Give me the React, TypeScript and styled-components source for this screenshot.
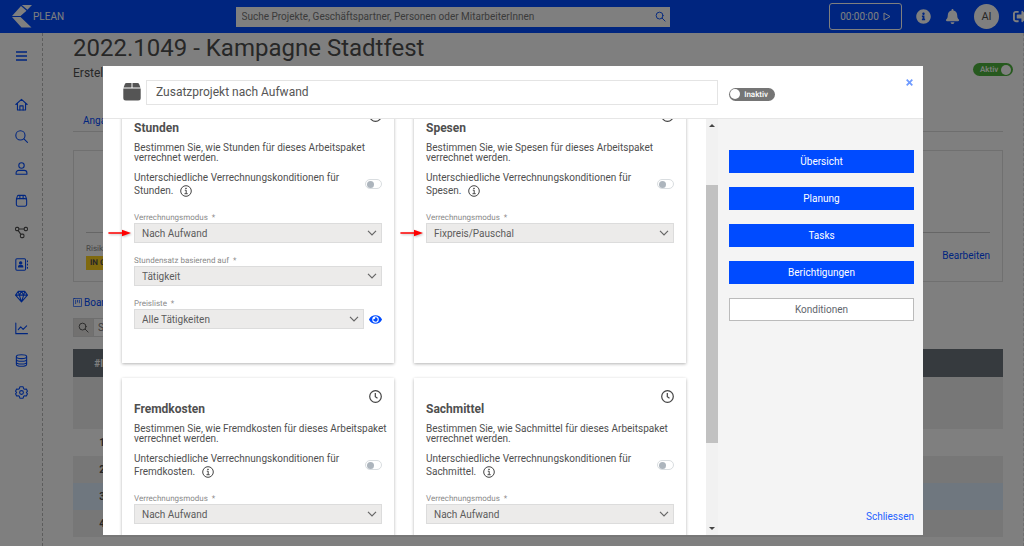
import React, { useId, useLayoutEffect, useRef } from "react";
import styled, { createGlobalStyle } from "styled-components";
import { FaBell, FaEye, FaInfoCircle, FaSignOutAlt } from "react-icons/fa";

const BLUE = "#004bff";
const INK = "#4f4f4f";

const GlobalStyle = createGlobalStyle`
  * { box-sizing: border-box; }
  html, body, #root { height: 100%; }
  body {
    margin: 0;
    overflow: hidden;
    background: #fff;
    color: ${INK};
    font-family: Roboto, "Liberation Sans", sans-serif;
    font-size: 10px;
  }
  button, input, select { font: inherit; color: inherit; }
  a { text-decoration: none; color: ${BLUE}; }
`;

/* ---------- Page behind the dialog ---------- */

const Page = styled.div`
  display: flex;
  flex-direction: column;
  height: 100vh;
  overflow: hidden;
`;

const TopBar = styled.header`
  display: flex;
  align-items: center;
  flex: none;
  height: 33px;
  background: ${BLUE};
  color: #fff;
`;

const Brand = styled.a`
  display: flex;
  align-items: center;
  gap: 1px;
  width: 23%;
  padding-left: 12px;
  color: #fff;
  font-size: 10px;
`;

const GlobalSearch = styled.form`
  display: flex;
  align-items: center;
  flex: 0 0 434px;
  height: 20px;
  padding: 0 4px 0 6px;
  background: #fff;
  color: ${BLUE};
`;

const SearchInput = styled.input`
  flex: 1;
  min-width: 0;
  padding: 0;
  border: 0;
  outline: 0;
  background: none;
  font-size: 10px;
  color: ${INK};
  &::placeholder { color: #777; opacity: 1; }
`;

const IconButton = styled.button`
  display: flex;
  align-items: center;
  justify-content: center;
  flex: none;
  padding: 0;
  border: 0;
  background: none;
  color: inherit;
`;

const TopActions = styled.div`
  display: flex;
  flex: 1;
  align-items: center;
  justify-content: flex-end;
  gap: 14px;
  margin-right: -4px;
`;

const TimerButton = styled.button`
  display: flex;
  align-items: center;
  justify-content: center;
  gap: 4px;
  width: 73px;
  height: 27px;
  padding: 0;
  border: 1px solid #fff;
  border-radius: 3px;
  background: none;
  font-size: 10px;
`;

const Avatar = styled.span`
  display: flex;
  align-items: center;
  justify-content: center;
  width: 25px;
  height: 25px;
  border-radius: 50%;
  background: #fff;
  color: ${INK};
  font-size: 11px;
`;

const Workspace = styled.div`
  display: flex;
  flex: 1;
  min-height: 0;
`;

const Sidebar = styled.nav`
  display: flex;
  flex-direction: column;
  align-items: center;
  flex: none;
  width: 43px;
  padding-top: 15px;
  border-right: 1px dashed #bbb;
`;

const MenuButton = styled(IconButton)`
  height: 16px;
  margin-bottom: 32px;
  color: ${BLUE};
`;

const NavLink = styled.a<{ $muted?: boolean }>`
  display: flex;
  height: 16px;
  align-items: center;
  margin-bottom: 16px;
  color: ${(p) => (p.$muted ? INK : BLUE)};
`;

const Main = styled.main`
  flex: 1;
  min-width: 0;
  padding: 0 20px 0 30px;
  border-right: 1px dashed #ddd;
`;

const TitleRow = styled.div`
  display: flex;
  justify-content: space-between;
  margin-right: -10px;
`;

const Title = styled.h1`
  margin: 0;
  font-size: 24px;
  line-height: 30px;
  font-weight: 400;
`;

const Subtitle = styled.p`
  margin: 0;
  font-size: 12px;
  line-height: 20px;
`;

const StatusPill = styled.button<{ $on?: boolean }>`
  display: flex;
  flex-direction: ${(p) => (p.$on ? "row-reverse" : "row")};
  align-items: center;
  justify-content: space-between;
  flex: none;
  width: ${(p) => (p.$on ? 40 : 46)}px;
  height: 13px;
  padding: ${(p) => (p.$on ? "0 2px 0 7px" : "0 7px 0 1px")};
  border: 0;
  border-radius: 7px;
  background: ${(p) => (p.$on ? "#4db33d" : "#757575")};
  color: #fff;
  font-size: 8px;
  font-weight: 500;
  text-rendering: geometricPrecision;
  &::before {
    content: "";
    width: 10px;
    height: 10px;
    border-radius: 50%;
    background: #fff;
  }
`;

const PageStatus = styled.div`
  padding-top: 30px;
`;

const Tabs = styled.div`
  margin-top: 28px;
  padding: 0 10px;
  height: 21px;
  border-bottom: 1px solid #ddd;
  line-height: 20px;
`;

const InfoCard = styled.section`
  display: flex;
  flex-direction: column;
  justify-content: flex-end;
  height: 132px;
  margin-top: 18px;
  padding: 0 12px 11px;
  border: 1px solid #e0e0e0;
`;

const InfoRow = styled.div`
  display: flex;
  align-items: flex-start;
  justify-content: space-between;
  padding-top: 11px;
  border-top: 1px solid #ccc;
`;

const EditLink = styled.a`
  line-height: 24px;
`;

const RiskLabel = styled.div`
  margin-bottom: 2px;
  font-size: 8px;
  line-height: 10px;
  color: #888;
  text-rendering: geometricPrecision;
`;

const RiskBadge = styled.span`
  display: inline-block;
  padding: 0 4px;
  background: #ffd21f;
  font-size: 8px;
  line-height: 14px;
  font-weight: 700;
  text-rendering: geometricPrecision;
`;

const BoardLink = styled.a`
  display: flex;
  align-items: center;
  gap: 2px;
  height: 12px;
  margin-top: 14px;
`;

const TableSearch = styled.form`
  display: flex;
  width: 200px;
  height: 19px;
  margin: 10px 0 12px;
  border: 1px solid #ddd;
  line-height: 17px;
`;

const SearchAddon = styled.button`
  display: flex;
  align-items: center;
  justify-content: center;
  width: 20px;
  padding: 0;
  margin-right: 4px;
  border: 0;
  border-right: 1px solid #ddd;
  background: #e4e2e0;
`;

const Table = styled.table`
  width: 100%;
  border-collapse: collapse;
  table-layout: fixed;
  font-weight: 700;
`;

const HeadRow = styled.tr`
  height: 28px;
  background: #6c757d;
  color: #fff;
`;

const BodyRow = styled.tr<{ $tone: string; $tall?: boolean }>`
  height: ${(p) => (p.$tall ? 52 : 27)}px;
  background: ${(p) => p.$tone};
`;

const NumberCell = styled.td`
  width: 58px;
  padding: 0;
  text-align: center;
`;

/* ---------- Dialog ---------- */

const Backdrop = styled.div`
  position: fixed;
  inset: 0;
  display: flex;
  padding: 66px 101px 11px 103px;
  background: rgba(0, 0, 0, 0.5);
`;

const Dialog = styled.div`
  display: flex;
  flex-direction: column;
  flex: 1;
  min-width: 0;
  border: 0;
  background: #fff;
`;

const DialogHeader = styled.header`
  display: flex;
  align-items: center;
  flex: none;
  height: 53px;
  border-bottom: 1px solid #e6e6e6;
`;

const NameArea = styled.label`
  display: flex;
  align-items: center;
  flex: 1;
  gap: 5px;
  padding-left: 20px;
  color: #555;
`;

const NameInput = styled.input`
  flex: 1;
  min-width: 0;
  height: 25px;
  padding: 0 9px;
  border: 1px solid #e4e4e4;
  outline: 0;
  background: #fff;
  font-size: 12px;
`;

const HeaderSide = styled.div`
  display: flex;
  align-items: center;
  justify-content: space-between;
  flex: none;
  width: 205px;
  padding: 4px 10px 0 11px;
`;

const CloseButton = styled(IconButton)`
  align-self: flex-start;
  height: 8px;
  margin-top: -9px;
  color: #6f9bff;
`;

const DialogBody = styled.div`
  display: flex;
  flex: 1;
  min-height: 0;
`;

const ScrollArea = styled.div`
  flex: 1;
  min-width: 0;
  overflow: hidden;
`;

const CardGrid = styled.div`
  display: grid;
  grid-template-columns: 1fr 1fr;
  gap: 15px 20px;
  padding: 67px 20px 20px 19px;
`;

const Card = styled.section`
  min-height: 266px;
  padding: 12px;
  background: #fff;
  box-shadow: 0 1px 3px rgba(0, 0, 0, 0.3);
`;

const ClockRow = styled.div`
  display: flex;
  justify-content: flex-end;
  height: 12px;
`;

const CardTitle = styled.h2`
  margin: 0 0 8px;
  font-size: 12px;
  line-height: 14px;
  font-weight: 700;
`;

const CardText = styled.p`
  margin: 0 -8px 0 0;
  font-size: 10px;
  line-height: 10px;
`;

const SwitchRow = styled.div`
  display: flex;
  align-items: center;
  justify-content: space-between;
  height: 26px;
  margin: 8px 0 15px;
`;

const SwitchLabel = styled.label`
  width: 210px;
  font-size: 10px;
  line-height: 13px;
`;

const InfoMark = styled.svg`
  margin-left: 4px;
  vertical-align: -3px;
`;

const Switch = styled.input`
  appearance: none;
  display: flex;
  align-items: center;
  width: 17px;
  height: 10px;
  margin: 0;
  padding: 0 1px;
  border: 1px solid #d9dde0;
  border-radius: 5px;
  background: #fff;
  &::before {
    content: "";
    width: 7px;
    height: 7px;
    border-radius: 50%;
    background: #adb5bd;
  }
`;

const Field = styled.div`
  position: relative;
  margin-bottom: 12px;
`;

const FieldLabel = styled.label`
  display: block;
  font-size: 8px;
  line-height: 11px;
  color: #8a8a8a;
  text-rendering: geometricPrecision;
`;

const FieldLine = styled.div`
  display: flex;
  align-items: center;
  gap: 5px;
`;

const SelectBox = styled.div`
  display: grid;
  flex: 1;
  align-items: center;
  & > * { grid-area: 1 / 1; }
  & > svg { justify-self: end; margin-right: 5px; pointer-events: none; }
`;

const Select = styled.select`
  appearance: none;
  width: 100%;
  height: 20px;
  padding: 0 7px;
  border: 1px solid #dcdcdc;
  border-radius: 0;
  outline: 0;
  background: #ecebea;
  font-size: 10px;
  color: #5c5c5c;
`;

const Arrow = styled.svg`
  position: absolute;
  left: -26px;
  bottom: 5px;
  filter: drop-shadow(1px 1px 1px rgba(0, 0, 0, 0.25));
`;

const ScrollTrack = styled.div`
  display: flex;
  flex-direction: column;
  align-items: center;
  flex: none;
  width: 12px;
  background: #f1f1f1;
`;

const ScrollThumb = styled.div`
  flex: 258;
  width: 100%;
  background: #c1c1c1;
`;

const ScrollGap = styled.div<{ $size: number }>`
  flex: ${(p) => p.$size};
`;

const SidePanel = styled.aside`
  display: flex;
  flex-direction: column;
  flex: none;
  gap: 14px;
  width: 205px;
  padding: 31px 9px 11px 11px;
  background: #f4f4f4;
`;

const SideButton = styled.button<{ $current?: boolean }>`
  height: 23px;
  padding: 0;
  border: 1px solid ${(p) => (p.$current ? "#bbb" : BLUE)};
  background: ${(p) => (p.$current ? "#fff" : BLUE)};
  color: ${(p) => (p.$current ? "#5f666d" : "#fff")};
  font-size: 10px;
`;

const DismissButton = styled.button`
  align-self: flex-end;
  margin-top: auto;
  padding: 0;
  border: 0;
  background: none;
  color: #2462ff;
  font-size: 10px;
  line-height: 14px;
`;

/* ---------- Icons ---------- */

const Line = ({ size = 14, width = 2, children }: { size?: number; width?: number; children: React.ReactNode }) => (
  <svg width={size} height={size} viewBox="0 0 24 24" fill="none" stroke="currentColor" strokeWidth={width} strokeLinecap="round" strokeLinejoin="round" aria-hidden="true">
    {children}
  </svg>
);

const Magnifier = ({ size }: { size?: number }) => (
  <Line size={size}><circle cx="10" cy="10" r="7.5" /><path d="m15.5 15.5 6.5 6.5" /></Line>
);

const navItems: { label: string; muted?: boolean; art: React.ReactNode }[] = [
  { label: "Start", art: <><path d="M1.5 12 12 2.500 22.500 12M4.500 10v12h15V10" /><path d="M9 22v-7.500h6V22" /></> },
  { label: "Suche", art: <><circle cx="10" cy="10" r="8.500" /><path d="m16.500 16.500 6.500 6.500" /></> },
  { label: "Personen", art: <><circle cx="12" cy="6.500" r="5" /><path d="M2 22.500v-2a5 5 0 0 1 5-5h10a5 5 0 0 1 5 5v2z" /></> },
  { label: "Pakete", art: <><rect x="2.500" y="8.500" width="19" height="14" rx="3" /><path d="M2.500 9.500 4.500 4q.5-1.500 2-1.500h11q1.500 0 2 1.500l2 5.500M9 2.500v6M15 2.500v6" /></> },
  { label: "Abläufe", muted: true, art: <><rect x="1" y="2.500" width="6" height="6" rx="2" /><rect x="17" y="2.500" width="6" height="6" rx="2" /><rect x="10" y="15" width="6.500" height="6.500" rx="2" /><path d="M7 5.500h10M6 8.500l4.500 6.500" /></> },
  { label: "Kontakte", art: <><rect x="1.500" y="1.500" width="18" height="21" rx="2" /><circle cx="10.500" cy="9" r="2.200" fill="currentColor" /><path d="M6.500 16.500c0-4 8-4 8 0z" fill="currentColor" /><path d="M23 5v2M23 11v2M23 17v2" /></> },
  { label: "Angebote", art: <path d="M6 2.500h12l5 7L12 22 1 9.500zM1 9.500h22M6 2.500 8 9.500 12 22l4-12.500 2-7M8 9.500l4-7 4 7" /> },
  { label: "Auswertung", art: <path d="M1.500 2v19.500h21.500M6 14l4.500-5 4.500 4.500L21.500 7" /> },
  { label: "Daten", art: <><ellipse cx="12" cy="5" rx="9.500" ry="3.500" /><path d="M2.500 5v14c0 5 19 5 19 0V5M2.500 10c0 4.500 19 4.500 19 0M2.500 15c0 4.500 19 4.500 19 0" /></> },
  { label: "Einstellungen", art: <><path d="M9 1.500h6l1 3.500 2 1 3-.5 2 4-2 2.500 2 2.500-2 4-3-.5-2 1-1 3.500H9L8 19l-2-1-3 .5-2-4L3 12 1 9.500l2-4 3 .5 2-1z" /><circle cx="12" cy="12" r="3.500" /></> },
];

const Logo = () => (
  <svg width="20" height="23" viewBox="0 0 20 23" fill="#fff" aria-hidden="true">
    <path d="M9.800 0H20l-4.600 4.800zM9 1l5.500 4.800L8.500 11H0zM0 12h8.500L19.500 22.500H9.500z" />
  </svg>
);

const PackageIcon = () => (
  <svg width="18" height="18" viewBox="0 0 18 18" fill="currentColor" aria-hidden="true">
    <path d="M8.500 0v4.500H.6L1.800 1.200Q2.200 0 3.500 0zM9.500 0h5q1.300 0 1.700 1.200l1.200 3.300H9.500zM.3 5.500h17.400V15q0 2.500-2.500 2.500H2.800Q.3 17.500.3 15z" />
  </svg>
);

/* ---------- Conditions ---------- */

type FieldData = { label: string; value: string; preview?: boolean; arrow?: boolean };

const cards: { title: string; fields: FieldData[] }[] = [
  {
    title: "Stunden",
    fields: [
      { label: "Verrechnungsmodus", value: "Nach Aufwand", arrow: true },
      { label: "Stundensatz basierend auf", value: "Tätigkeit" },
      { label: "Preisliste", value: "Alle Tätigkeiten", preview: true },
    ],
  },
  { title: "Spesen", fields: [{ label: "Verrechnungsmodus", value: "Fixpreis/Pauschal", arrow: true }] },
  { title: "Fremdkosten", fields: [{ label: "Verrechnungsmodus", value: "Nach Aufwand" }] },
  { title: "Sachmittel", fields: [{ label: "Verrechnungsmodus", value: "Nach Aufwand" }] },
];

const SelectField = ({ label, value, preview, arrow }: FieldData) => {
  const id = useId();
  return (
    <Field>
      <FieldLabel htmlFor={id}>{`${label}\u00a0 *`}</FieldLabel>
      <FieldLine>
        <SelectBox>
          <Select id={id} defaultValue={value}><option>{value}</option></Select>
          <svg width="10" height="6" viewBox="0 0 10 6" fill="none" stroke="#666" strokeWidth="1.200" aria-hidden="true"><path d="m1 .8 4 4 4-4" /></svg>
        </SelectBox>
        {preview && <IconButton type="button" aria-label="Preisliste ansehen"><FaEye size={13} color={BLUE} /></IconButton>}
      </FieldLine>
      {arrow && (
        <Arrow width="24" height="10" viewBox="0 0 24 10" aria-hidden="true">
          <path d="M1 5h15" stroke="#f00" strokeWidth="1.600" strokeLinecap="round" />
          <path d="M14 1.800 23 5l-9 3.200z" fill="#f00" />
        </Arrow>
      )}
    </Field>
  );
};

const ConditionCard = ({ title, fields }: { title: string; fields: FieldData[] }) => {
  const id = useId();
  return (
    <Card>
      <ClockRow>
        <svg width="13" height="13" viewBox="0 0 13 13" fill="none" stroke="#444" strokeWidth="1.200" aria-hidden="true">
          <circle cx="6.500" cy="6.500" r="5.800" /><path d="M6.300 3v3.700l2.200 1.500" />
        </svg>
      </ClockRow>
      <CardTitle>{title}</CardTitle>
      <CardText>{`Bestimmen Sie, wie ${title} für dieses Arbeitspaket verrechnet werden.`}</CardText>
      <SwitchRow>
        <SwitchLabel htmlFor={id}>
          {`Unterschiedliche Verrechnungskonditionen für ${title}. `}
          <InfoMark width="12" height="12" viewBox="0 0 12 12" fill="none" stroke="#444" aria-hidden="true">
            <circle cx="6" cy="6" r="5.300" /><path d="M4.800 5.200h1.400v3.300M4.500 8.700h3.200" /><circle cx="6" cy="3.300" r=".4" fill="#444" />
          </InfoMark>
        </SwitchLabel>
        <Switch id={id} type="checkbox" />
      </SwitchRow>
      {fields.map((f) => <SelectField key={f.label} {...f} />)}
    </Card>
  );
};

const rows = [
  { n: "", tone: "#eee", tall: true },
  { n: "1", tone: "#fff" },
  { n: "2", tone: "#eee" },
  { n: "3", tone: "#dfefff" },
  { n: "4", tone: "#eee" },
];

export default function App() {
  const scroller = useRef<HTMLDivElement>(null);
  useLayoutEffect(() => {
    if (scroller.current) scroller.current.scrollTop = 89;
  }, []);

  return (
    <>
      <GlobalStyle />
      <Page>
        <TopBar>
          <Brand href="#"><Logo />PLEAN</Brand>
          <GlobalSearch>
            <SearchInput aria-label="Suche" placeholder="Suche Projekte, Geschäftspartner, Personen oder MitarbeiterInnen" />
            <IconButton type="button" aria-label="Suchen"><Magnifier size={11} /></IconButton>
          </GlobalSearch>
          <TopActions>
            <TimerButton>
              00:00:00
              <svg width="8" height="9" viewBox="0 0 8 9" fill="none" stroke="currentColor" aria-hidden="true"><path d="M1 1v7l6-3.500z" /></svg>
            </TimerButton>
            <IconButton aria-label="Info"><FaInfoCircle size={15} /></IconButton>
            <IconButton aria-label="Benachrichtigungen"><FaBell size={15} /></IconButton>
            <Avatar>AI</Avatar>
            <IconButton aria-label="Abmelden"><FaSignOutAlt size={15} /></IconButton>
          </TopActions>
        </TopBar>
        <Workspace>
          <Sidebar aria-label="Hauptmenü">
            <MenuButton aria-label="Menü">
              <svg width="11" height="10" viewBox="0 0 11 10" stroke="currentColor" strokeWidth="1.500" aria-hidden="true"><path d="M0 1h11M0 5h11M0 9h11" /></svg>
            </MenuButton>
            {navItems.map((n) => (
              <NavLink key={n.label} href="#" aria-label={n.label} $muted={n.muted}><Line size={13}>{n.art}</Line></NavLink>
            ))}
          </Sidebar>
          <Main>
            <TitleRow>
              <div>
                <Title>2022.1049 - Kampagne Stadtfest</Title>
                <Subtitle>Erstellt am</Subtitle>
              </div>
              <PageStatus><StatusPill $on>Aktiv</StatusPill></PageStatus>
            </TitleRow>
            <Tabs><a href="#">Angaben</a></Tabs>
            <InfoCard>
              <InfoRow>
                <div>
                  <RiskLabel>Risiko</RiskLabel>
                  <RiskBadge>IN GEFAHR</RiskBadge>
                </div>
                <EditLink href="#">Bearbeiten</EditLink>
              </InfoRow>
            </InfoCard>
            <BoardLink href="#">
              <Line size={9}><rect x="1" y="1" width="22" height="22" rx="2" /><path d="M7 6v9M12 6v5M17 6v7" /></Line>
              Board
            </BoardLink>
            <TableSearch>
              <SearchAddon type="button" aria-label="Suchen"><Magnifier size={11} /></SearchAddon>
              <SearchInput aria-label="Tabelle durchsuchen" placeholder="Suche" />
            </TableSearch>
            <Table>
              <thead>
                <HeadRow><NumberCell as="th">#ID</NumberCell><th /></HeadRow>
              </thead>
              <tbody>
                {rows.map((r, i) => (
                  <BodyRow key={i} $tone={r.tone} $tall={r.tall}><NumberCell>{r.n}</NumberCell><td /></BodyRow>
                ))}
              </tbody>
            </Table>
          </Main>
        </Workspace>
      </Page>

      <Backdrop>
        <Dialog role="dialog" aria-label="Zusatzprojekt nach Aufwand">
          <DialogHeader>
            <NameArea>
              <PackageIcon />
              <NameInput aria-label="Name" defaultValue="Zusatzprojekt nach Aufwand" />
            </NameArea>
            <HeaderSide>
              <StatusPill>Inaktiv</StatusPill>
              <CloseButton aria-label="Schließen">
                <svg width="7" height="7" viewBox="0 0 7 7" stroke="currentColor" strokeWidth="1.800" aria-hidden="true"><path d="m.7.7 5.600 5.600M6.300.7.7 6.300" /></svg>
              </CloseButton>
            </HeaderSide>
          </DialogHeader>
          <DialogBody>
            <ScrollArea ref={scroller}>
              <CardGrid>{cards.map((c) => <ConditionCard key={c.title} {...c} />)}</CardGrid>
            </ScrollArea>
            <ScrollTrack aria-hidden="true">
              <svg width="12" height="12" viewBox="0 0 12 12" fill="#444"><path d="M3 8h6L6 5z" /></svg>
              <ScrollGap $size={54} />
              <ScrollThumb />
              <ScrollGap $size={80} />
              <svg width="12" height="12" viewBox="0 0 12 12" fill="#444"><path d="M3 4h6L6 7z" /></svg>
            </ScrollTrack>
            <SidePanel>
              {["Übersicht", "Planung", "Tasks", "Berichtigungen"].map((t) => <SideButton key={t}>{t}</SideButton>)}
              <SideButton $current>Konditionen</SideButton>
              <DismissButton>Schliessen</DismissButton>
            </SidePanel>
          </DialogBody>
        </Dialog>
      </Backdrop>
    </>
  );
}
